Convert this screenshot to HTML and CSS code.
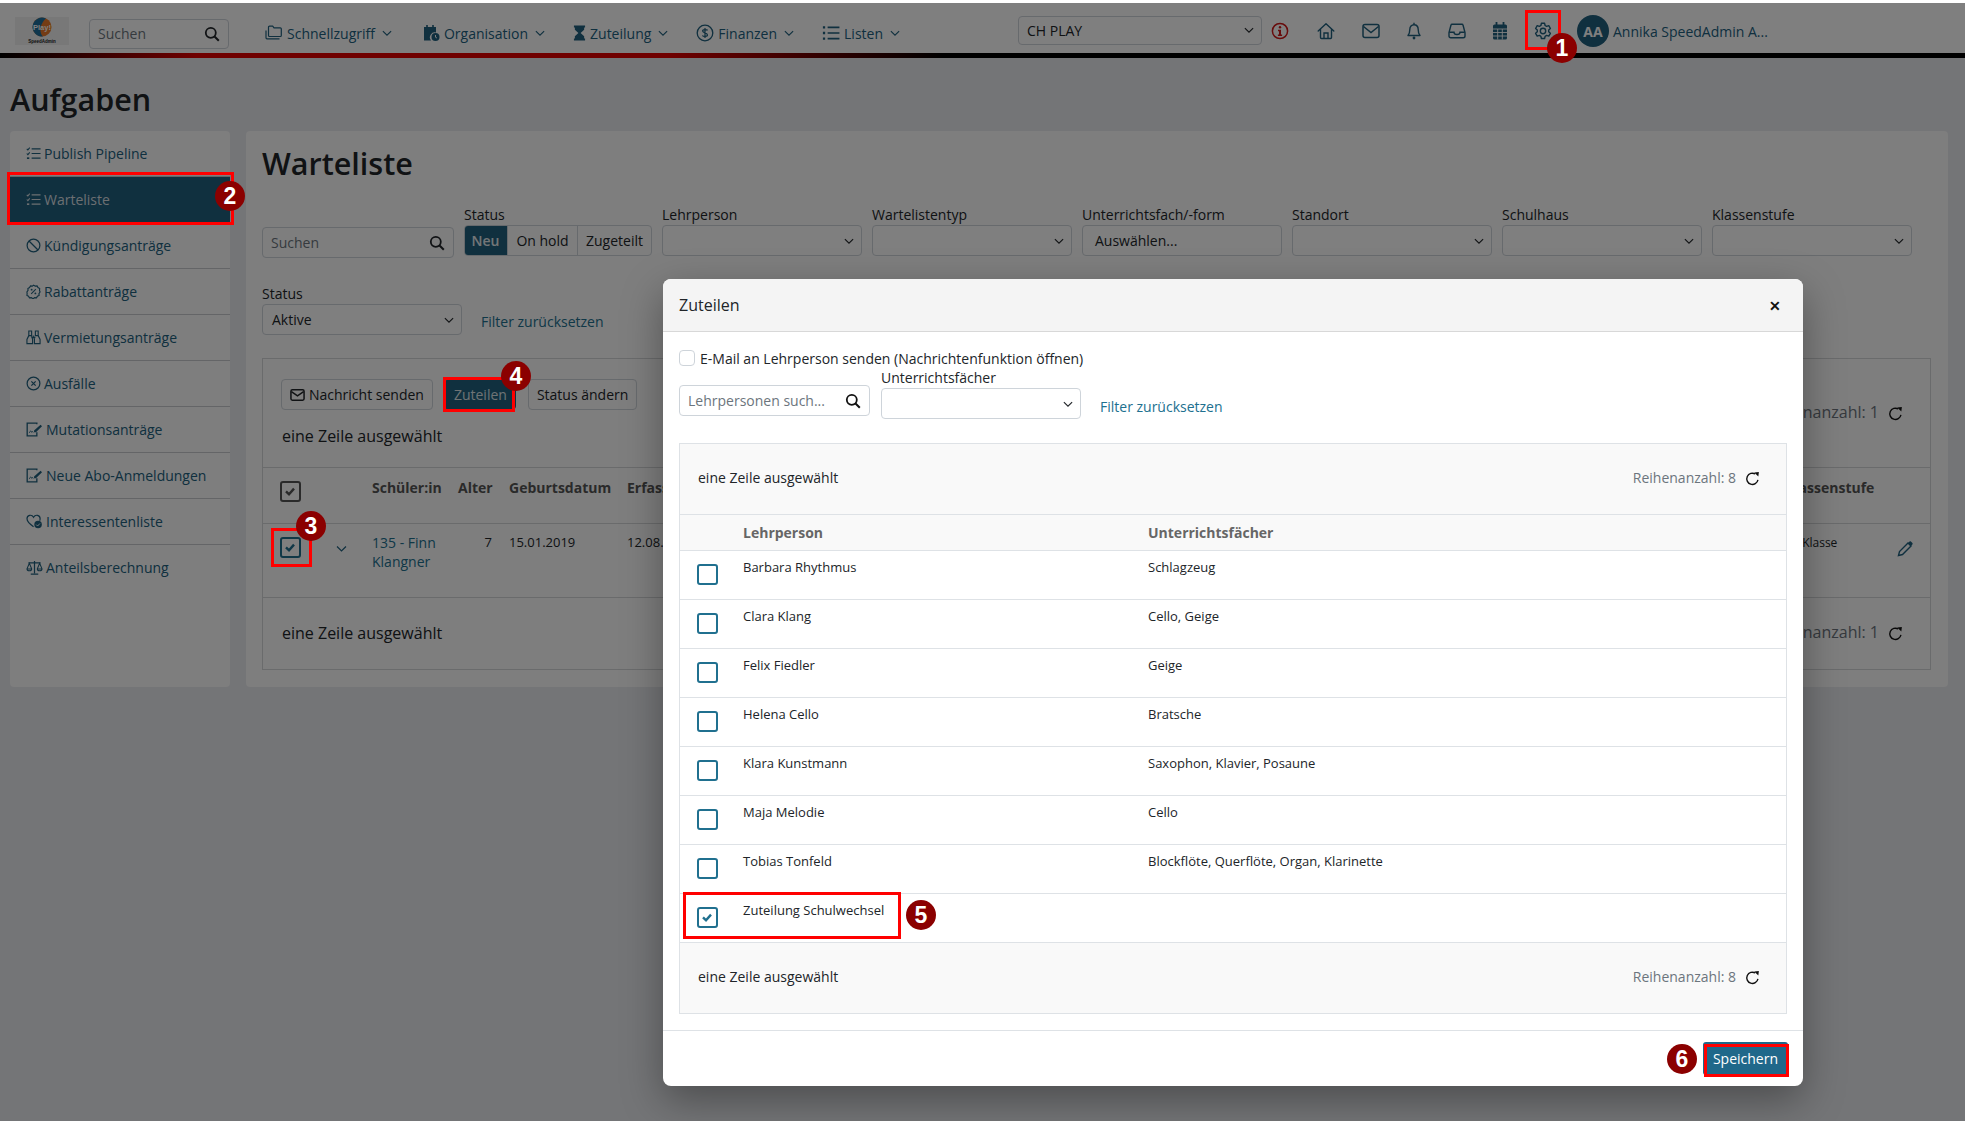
FILE: index.html
```html
<!DOCTYPE html>
<html lang="de">
<head>
<meta charset="utf-8">
<title>Aufgaben</title>
<link rel="stylesheet" href="styles.css">
</head>
<body>
<svg class="defs" width="0" height="0" aria-hidden="true">
  <symbol id="i-search" viewBox="0 0 16 16"><circle cx="6.8" cy="6.8" r="5" fill="none" stroke="currentColor" stroke-width="1.8"/><path d="M10.5 10.5l4.3 4.300" stroke="currentColor" stroke-width="2" fill="none"/></symbol>
  <symbol id="i-chev" viewBox="0 0 16 16"><path d="M2.500 5.500L8 11l5.500-5.500" fill="none" stroke="currentColor" stroke-width="1.500"/></symbol>
  <symbol id="i-folders" viewBox="0 0 18 16"><path d="M3.500 3V2.200c0-.6.400-1 1-1h3.200l1.300 1.600h6.300c.6 0 1 .4 1 1v6.700c0 .6-.4 1-1 1H4.500c-.6 0-1-.4-1-1z M1 5.500v7.300c0 .6.400 1 1 1h12.500" fill="none" stroke="currentColor" stroke-width="1.200"/></symbol>
  <symbol id="i-calclock" viewBox="0 0 18 18"><path d="M2 3h12v5.500a5 5 0 0 0-5 8H2z" fill="currentColor"/><path d="M5 1v3M11 1v3" stroke="currentColor" stroke-width="1.600"/><circle cx="13.500" cy="13" r="4" fill="currentColor"/><path d="M13.500 11v2.200l1.400.8" stroke="#fff" fill="none"/></symbol>
  <symbol id="i-hourglass" viewBox="0 0 14 18"><path d="M1 1h12v2h-1v2.500L8.200 9l3.800 3.500V15h1v2H1v-2h1v-2.500L5.800 9 2 5.500V3H1z" fill="currentColor"/></symbol>
  <symbol id="i-dollar" viewBox="0 0 18 18"><circle cx="9" cy="9" r="7.800" fill="none" stroke="currentColor" stroke-width="1.300"/><path d="M11.600 6.400C11 5.300 6.600 5 6.600 7s4.900 1.700 4.900 4c0 1.900-4.400 1.700-5.100.5M9 4v10" fill="none" stroke="currentColor" stroke-width="1.200"/></symbol>
  <symbol id="i-list" viewBox="0 0 16 16"><path d="M5 3h10.500M5 8h10.500M5 13h10.500" stroke="currentColor" stroke-width="1.500"/><path d="M.8 3h2M.8 8h2M.8 13h2" stroke="currentColor" stroke-width="2.200"/></symbol>
  <symbol id="i-info" viewBox="0 0 18 18"><circle cx="9" cy="9" r="7.600" fill="none" stroke="currentColor" stroke-width="1.500"/><circle cx="9" cy="5.300" r="1.200" fill="currentColor"/><path d="M7 7.800h3v4.700h1.100V14H6.900v-1.500H8V9.300H7z" fill="currentColor"/></symbol>
  <symbol id="i-home" viewBox="0 0 18 18"><path d="M1.200 9L9 1.800 16.800 9M3.500 7.300v8.200c0 .6.400 1 1 1h9c.6 0 1-.4 1-1V7.300" fill="none" stroke="currentColor" stroke-width="1.400" stroke-linejoin="round" stroke-linecap="round"/><path d="M7 16.500v-5.500h4v5.500" fill="none" stroke="currentColor" stroke-width="1.400"/></symbol>
  <symbol id="i-mail" viewBox="0 0 18 16"><rect x="1" y="1.500" width="16" height="13" rx="2" fill="none" stroke="currentColor" stroke-width="1.500"/><path d="M1.500 3.500L9 9.500l7.500-6" fill="none" stroke="currentColor" stroke-width="1.500"/></symbol>
  <symbol id="i-bell" viewBox="0 0 14 18"><path d="M1 13.500h12c-1.200-1.400-1.800-3-1.800-6 0-3-1.800-4.800-4.200-4.800S2.800 4.500 2.800 7.500c0 3-.6 4.600-1.800 6zM7 .8v2" fill="none" stroke="currentColor" stroke-width="1.400" stroke-linejoin="round"/><circle cx="7" cy="16" r="1.400" fill="currentColor"/></symbol>
  <symbol id="i-inbox" viewBox="0 0 18 16"><path d="M4 1.200h10c.5 0 .9.300 1 .8l2 7.500V13c0 1-.7 1.800-1.800 1.800H2.800C1.700 14.800 1 14 1 13V9.500L3 2c.1-.5.500-.8 1-.8z" fill="none" stroke="currentColor" stroke-width="1.400"/><path d="M1.300 9.300H6c0 3 6 3 6 0h4.700" fill="none" stroke="currentColor" stroke-width="1.400"/></symbol>
  <symbol id="i-cal" viewBox="0 0 16 18"><rect x="1" y="2.500" width="14" height="15" rx="1.500" fill="currentColor"/><path d="M4.500 0v4M11.500 0v4" stroke="currentColor" stroke-width="1.800"/><path d="M1 7h14M1 10.500h14M1 14h14M5.700 7v10.500M10.300 7v10.500" stroke="#fff" stroke-width=".9"/></symbol>
  <symbol id="i-gear" viewBox="0 0 18 18"><path d="M7.400 1.300h3.200l.5 2.200 1.500.9 2.200-.7 1.600 2.800-1.700 1.500v1.800l1.700 1.500-1.600 2.800-2.200-.7-1.500.9-.5 2.200H7.400l-.5-2.200-1.500-.9-2.200.7-1.600-2.800 1.700-1.500V8l-1.700-1.500 1.600-2.800 2.200.7 1.500-.9z" fill="none" stroke="currentColor" stroke-width="1.400" stroke-linejoin="round"/><circle cx="9" cy="9" r="2.700" fill="none" stroke="currentColor" stroke-width="1.400"/></symbol>
  <symbol id="i-listcheck" viewBox="0 0 16 16"><path d="M6 3h9.500M6 8h9.500M6 13h9.500" stroke="currentColor" stroke-width="1.300"/><path d="M.8 3l1.200 1.200L4 1.800M.8 8l1.200 1.200L4 6.800" fill="none" stroke="currentColor" stroke-width="1.100"/><path d="M1 13h2.500" stroke="currentColor" stroke-width="1.800"/></symbol>
  <symbol id="i-ban" viewBox="0 0 16 16"><circle cx="8" cy="8" r="6.800" fill="none" stroke="currentColor" stroke-width="1.300"/><path d="M3.200 3.200l9.600 9.600" stroke="currentColor" stroke-width="1.300"/></symbol>
  <symbol id="i-percent" viewBox="0 0 16 16"><path d="M8 1.200l1.800 1 2-.2 1 1.800 1.800 1-.2 2L15 8.500l-1.200 1.700.2 2-1.800.8-1 1.800-2-.2-1.700 1-1.800-1-2 .2-1-1.800-1.700-.8.2-2L1 8.500l1.200-1.700-.2-2 1.800-1 1-1.800 2 .2z" fill="none" stroke="currentColor" stroke-width="1.200"/><path d="M5.500 10.500l5-5" stroke="currentColor" stroke-width="1.100"/><circle cx="6" cy="6" r="1" fill="currentColor"/><circle cx="10" cy="10" r="1" fill="currentColor"/></symbol>
  <symbol id="i-binoc" viewBox="0 0 16 16"><path d="M3 1h3v5H3zM10 1h3v5h-3z" fill="none" stroke="currentColor" stroke-width="1.200"/><path d="M3 6L1 10v4.500h6V10L6 6M13 6l2 4v4.500H9V10l-1-4" fill="none" stroke="currentColor" stroke-width="1.200"/><path d="M6 8h4" stroke="currentColor" stroke-width="1.400"/></symbol>
  <symbol id="i-xcircle" viewBox="0 0 16 16"><circle cx="8" cy="8" r="6.800" fill="none" stroke="currentColor" stroke-width="1.300"/><path d="M5.700 5.700l4.600 4.600M10.300 5.700l-4.600 4.600" stroke="currentColor" stroke-width="1.300"/></symbol>
  <symbol id="i-sign" viewBox="0 0 18 16"><path d="M11.500 2.500V1.200H1.200v13.600h10.300V11" fill="none" stroke="currentColor" stroke-width="1.400"/><path d="M3.500 11.500c1.500-3 2-2 2.500-.5.700-1 1.200-1 1.800 0" fill="none" stroke="currentColor" stroke-width="1"/><path d="M8.500 9l7-6 1.500 1.500-6.500 6.500H8.500z" fill="currentColor"/></symbol>
  <symbol id="i-heart" viewBox="0 0 18 16"><path d="M8 13.500C3 10 1 7.800 1 5c0-4 5-5 7-1.500C10 0 15 1 15 5c0 .8-.2 1.500-.5 2.200" fill="none" stroke="currentColor" stroke-width="1.300"/><circle cx="12.800" cy="11.300" r="4" fill="currentColor"/><path d="M10.800 11.300l1.500 1.500 2.500-2.700" fill="none" stroke="#fff" stroke-width="1"/></symbol>
  <symbol id="i-scale" viewBox="0 0 18 16"><path d="M9 1v13M2.500 3h13M5 15h8" stroke="currentColor" stroke-width="1.300"/><path d="M3.500 3.500L1 9.500c0 2.600 5 2.600 5 0zM14.500 3.500L12 9.500c0 2.600 5 2.600 5 0zM1 9.500h5M12 9.500h5" fill="none" stroke="currentColor" stroke-width="1.100"/></symbol>
  <symbol id="i-envelope" viewBox="0 0 16 14"><rect x="1" y="1.500" width="14" height="11" rx="1.500" fill="none" stroke="currentColor" stroke-width="1.600"/><path d="M1.500 3.500L8 8l6.500-4.500" fill="none" stroke="currentColor" stroke-width="1.600"/></symbol>
  <symbol id="i-refresh" viewBox="0 0 16 16"><path d="M13.800 9.500A6 6 0 1 1 11 3.200" fill="none" stroke="currentColor" stroke-width="1.500"/><path d="M9.800 1.500l5 -.5-.6 4.800z" fill="currentColor"/></symbol>
  <symbol id="i-pencil" viewBox="0 0 16 16"><path d="M1.500 14.500l1-4L11 2l3 3-8.500 8.500z" fill="none" stroke="currentColor" stroke-width="1.400"/><path d="M10.800 2.200L12.600.6c.4-.4.9-.4 1.300 0l1.500 1.500c.4.400.4.900 0 1.300l-1.600 1.700z" fill="currentColor"/></symbol>
  <symbol id="i-check" viewBox="0 0 24 24"><path d="M6 12.500l4.500 4.500L18 8.500" fill="none" stroke="currentColor" stroke-width="3.600"/></symbol>
</svg>

<div class="strip"></div>
<header class="nav">
  <div class="logo">
    <svg viewBox="0 0 54 28" width="54" height="28"><circle cx="27" cy="10" r="9.500" fill="#e8792a"/><path d="M31 1.400a9.500 9.500 0 1 0-3 18.100c-5-5-2-14 3-18.100z" fill="#1f6f9c"/><text x="27" y="13" font-size="7.500" font-weight="700" fill="#fff" text-anchor="middle" font-family="Liberation Sans, sans-serif">Play!</text><text x="27" y="25.500" font-size="4.500" font-weight="700" fill="#222" text-anchor="middle" font-family="Liberation Sans, sans-serif">SpeedAdmin</text></svg>
  </div>
  <div class="nav-search"><span class="ph">Suchen</span><svg class="ic16 dark"><use href="#i-search"/></svg></div>
  <nav class="menu">
    <a class="menu-item"><svg class="ic-m"><use href="#i-folders"/></svg>Schnellzugriff<svg class="ic-c"><use href="#i-chev"/></svg></a>
    <a class="menu-item org"><svg class="ic-m"><use href="#i-calclock"/></svg>Organisation<svg class="ic-c"><use href="#i-chev"/></svg></a>
    <a class="menu-item"><svg class="ic-h"><use href="#i-hourglass"/></svg>Zuteilung<svg class="ic-c"><use href="#i-chev"/></svg></a>
    <a class="menu-item"><svg class="ic-m"><use href="#i-dollar"/></svg>Finanzen<svg class="ic-c"><use href="#i-chev"/></svg></a>
    <a class="menu-item"><svg class="ic-m"><use href="#i-list"/></svg>Listen<svg class="ic-c"><use href="#i-chev"/></svg></a>
  </nav>
  <div class="nav-right">
    <div class="select school"><span>CH PLAY</span><svg class="ic-c dark"><use href="#i-chev"/></svg></div>
    <svg class="ni info"><use href="#i-info"/></svg>
    <div class="ni-row">
      <svg class="ni home"><use href="#i-home"/></svg>
      <svg class="ni"><use href="#i-mail"/></svg>
      <svg class="ni"><use href="#i-bell"/></svg>
      <svg class="ni"><use href="#i-inbox"/></svg>
      <svg class="ni"><use href="#i-cal"/></svg>
      <svg class="ni"><use href="#i-gear"/></svg>
    </div>
    <div class="avatar">AA</div>
    <span class="user">Annika SpeedAdmin A...</span>
  </div>
</header>
<div class="rule"></div>

<div class="page">
  <h1 class="page-title">Aufgaben</h1>
  <div class="layout">
    <aside class="side">
      <a class="side-item"><svg class="si"><use href="#i-listcheck"/></svg>Publish Pipeline</a>
      <a class="side-item active"><svg class="si"><use href="#i-listcheck"/></svg>Warteliste</a>
      <a class="side-item"><svg class="si"><use href="#i-ban"/></svg>Kündigungsanträge</a>
      <a class="side-item"><svg class="si"><use href="#i-percent"/></svg>Rabattanträge</a>
      <a class="side-item"><svg class="si"><use href="#i-binoc"/></svg>Vermietungsanträge</a>
      <a class="side-item"><svg class="si"><use href="#i-xcircle"/></svg>Ausfälle</a>
      <a class="side-item"><svg class="si wide"><use href="#i-sign"/></svg>Mutationsanträge</a>
      <a class="side-item"><svg class="si wide"><use href="#i-sign"/></svg>Neue Abo-Anmeldungen</a>
      <a class="side-item"><svg class="si wide"><use href="#i-heart"/></svg>Interessentenliste</a>
      <a class="side-item last"><svg class="si wide"><use href="#i-scale"/></svg>Anteilsberechnung</a>
    </aside>
    <main class="main">
      <h2 class="main-title">Warteliste</h2>
      <div class="filters first">
        <div class="input search-main"><span class="ph">Suchen</span><svg class="ic16 dark"><use href="#i-search"/></svg></div>
        <div class="field status">
          <label>Status</label>
          <div class="btn-group"><span class="seg on">Neu</span><span class="seg hold">On hold</span><span class="seg assigned">Zugeteilt</span></div>
        </div>
        <div class="field"><label>Lehrperson</label><div class="select"><span></span><svg class="ic-c dark"><use href="#i-chev"/></svg></div></div>
        <div class="field"><label>Wartelistentyp</label><div class="select"><span></span><svg class="ic-c dark"><use href="#i-chev"/></svg></div></div>
        <div class="field"><label>Unterrichtsfach/-form</label><div class="select"><span class="pick">Auswählen...</span></div></div>
        <div class="field"><label>Standort</label><div class="select"><span></span><svg class="ic-c dark"><use href="#i-chev"/></svg></div></div>
        <div class="field"><label>Schulhaus</label><div class="select"><span></span><svg class="ic-c dark"><use href="#i-chev"/></svg></div></div>
        <div class="field"><label>Klassenstufe</label><div class="select"><span></span><svg class="ic-c dark"><use href="#i-chev"/></svg></div></div>
      </div>
      <div class="filters second">
        <div class="field"><label>Status</label><div class="select"><span>Aktive</span><svg class="ic-c dark"><use href="#i-chev"/></svg></div></div>
        <a class="reset">Filter zurücksetzen</a>
      </div>
      <section class="tbl">
        <div class="tbl-top">
          <div>
            <div class="actions">
              <span class="btn"><svg class="ic-e"><use href="#i-envelope"/></svg>Nachricht senden</span>
              <span class="btn primary">Zuteilen</span>
              <span class="btn">Status ändern</span>
            </div>
            <div class="selected">eine Zeile ausgewählt</div>
          </div>
          <div class="count">Reihenanzahl: 1<svg class="ic-r"><use href="#i-refresh"/></svg></div>
        </div>
        <div class="tbl-head">
          <span class="cb gray"><svg><use href="#i-check"/></svg></span>
          <span></span>
          <span>Schüler:in</span><span class="num">Alter</span><span>Geburtsdatum</span><span class="cut">Erfassungsdatum</span>
          <span class="gap"></span><span class="kl">Klassenstufe</span><span></span>
        </div>
        <div class="tbl-row">
          <span class="cb"><svg><use href="#i-check"/></svg></span>
          <svg class="ic-exp"><use href="#i-chev"/></svg>
          <a class="link">135 - Finn Klangner</a><span class="num">7</span><span>15.01.2019</span><span class="cut">12.08.2025</span>
          <span class="gap"></span><span class="small">1. Klasse</span><svg class="ic-p"><use href="#i-pencil"/></svg>
        </div>
        <div class="tbl-bottom">
          <div class="selected">eine Zeile ausgewählt</div>
          <div class="count">Reihenanzahl: 1<svg class="ic-r"><use href="#i-refresh"/></svg></div>
        </div>
      </section>
    </main>
  </div>
</div>

<div class="backdrop"></div>

<div class="modal">
  <div class="m-head"><span>Zuteilen</span><span class="close">✕</span></div>
  <div class="m-body">
    <div class="m-check"><span class="box"></span>E-Mail an Lehrperson senden (Nachrichtenfunktion öffnen)</div>
    <div class="m-filters">
      <div class="input m-search"><span class="ph">Lehrpersonen such...</span><svg class="ic16 black"><use href="#i-search"/></svg></div>
      <div class="field"><label>Unterrichtsfächer</label><div class="select"><span></span><svg class="ic-c dark"><use href="#i-chev"/></svg></div></div>
      <a class="reset">Filter zurücksetzen</a>
    </div>
    <section class="m-tbl">
      <div class="m-band top"><span>eine Zeile ausgewählt</span><span class="m-count">Reihenanzahl: 8<svg class="ic-r"><use href="#i-refresh"/></svg></span></div>
      <div class="m-row head"><span></span><span>Lehrperson</span><span>Unterrichtsfächer</span></div>
      <div class="m-row"><span class="cb"></span><span>Barbara Rhythmus</span><span>Schlagzeug</span></div>
      <div class="m-row"><span class="cb"></span><span>Clara Klang</span><span>Cello, Geige</span></div>
      <div class="m-row"><span class="cb"></span><span>Felix Fiedler</span><span>Geige</span></div>
      <div class="m-row"><span class="cb"></span><span>Helena Cello</span><span>Bratsche</span></div>
      <div class="m-row"><span class="cb"></span><span>Klara Kunstmann</span><span>Saxophon, Klavier, Posaune</span></div>
      <div class="m-row"><span class="cb"></span><span>Maja Melodie</span><span>Cello</span></div>
      <div class="m-row"><span class="cb"></span><span>Tobias Tonfeld</span><span>Blockflöte, Querflöte, Organ, Klarinette</span></div>
      <div class="m-row"><span class="cb"><svg><use href="#i-check"/></svg></span><span>Zuteilung Schulwechsel</span><span></span></div>
      <div class="m-band bottom"><span>eine Zeile ausgewählt</span><span class="m-count">Reihenanzahl: 8<svg class="ic-r"><use href="#i-refresh"/></svg></span></div>
    </section>
  </div>
  <div class="m-foot"><span class="save">Speichern</span></div>
</div>

<div class="mark m1"></div>
<div class="mark m2"></div>
<div class="mark m3"></div>
<div class="mark m4"></div>
<div class="mark m5"></div>
<div class="mark m6"></div>
<div class="badge b1">1</div>
<div class="badge b2">2</div>
<div class="badge b3">3</div>
<div class="badge b4">4</div>
<div class="badge b5">5</div>
<div class="badge b6">6</div>
</body>
</html>
```

FILE: styles.css
```css
* { box-sizing: border-box; }
html, body { margin: 0; padding: 0; }
body {
  position: relative;
  width: 1965px;
  height: 1121px;
  overflow: hidden;
  background: #e8eaee;
  font-family: "Open Sans", "Liberation Sans", sans-serif;
  font-size: 14px;
  color: #212529;
}
.defs { position: absolute; }
a { color: inherit; text-decoration: none; }

.strip { height: 3px; background: #fff; position: relative; z-index: 20; }

/* top bar */
.nav {
  height: 50px;
  background: #fff;
  display: flex;
  align-items: center;
  padding-left: 15px;
  padding-top: 6px;
}
.logo { width: 54px; height: 28px; background: #f0f0f0; }
.logo svg { display: block; }
.nav-search {
  width: 140px; height: 30px; margin-left: 20px; margin-top: 5px;
  border: 1px solid #ced4da; border-radius: 4px;
  display: flex; align-items: center; justify-content: space-between;
  padding: 0 8px;
}
.ph { color: #6c757d; }
.ic16 { width: 16px; height: 16px; }
.dark { color: #212529; }
.black { color: #111; }
.menu { display: flex; margin-left: 36px; margin-top: 4px; gap: 27px; color: #20607e; }
.menu-item { display: flex; align-items: center; white-space: nowrap; }
.menu-item.org { margin-left: 2px; }
.ic-m { width: 18px; height: 18px; margin-right: 4px; }
.ic-h { width: 13px; height: 18px; margin-right: 4px; }
.ic-c { width: 12px; height: 12px; margin-left: 6px; flex: none; }
.nav-right { display: flex; align-items: center; position: absolute; left: 1018px; top: 6px; height: 50px; }
.select {
  height: 31px; width: 200px;
  background: #fff;
  border: 1px solid #ced4da; border-radius: 4px;
  display: flex; align-items: center; justify-content: space-between;
  padding: 0 6px 0 8px;
}
.select.school { width: 244px; height: 29px; margin-top: -2px; }
.ni { width: 18px; height: 18px; color: #20607e; flex: none; }
.ni.info { color: #d01818; margin-left: 9px; }
.ni-row { display: flex; align-items: center; gap: 25px; margin-left: 28px; margin-right: 25px; }
.ni.home { margin-right: 2px; }
.avatar {
  width: 32px; height: 32px; border-radius: 50%;
  background: #20607e; color: #fff;
  font-weight: 700; font-size: 14px;
  display: flex; align-items: center; justify-content: center;
}
.user { margin-left: 4px; color: #20607e; white-space: nowrap; }
.rule { height: 5px; background: linear-gradient(90deg, #000 0, #e00000 10%, #e00000 34%, #000 48%); }

/* page */
.page { padding: 0 17px 0 10px; }
.page-title { margin: 20px 0 11px; font-size: 30.5px; line-height: 42px; font-weight: 600; color: #212529; }
.layout { display: flex; gap: 16px; height: 556px; }
.side { width: 220px; background: #fcfcfc; border-radius: 4px; flex: none; }
.side-item {
  height: 46px; display: flex; align-items: center;
  padding-left: 16px;
  color: #20607e;
  border-bottom: 1px solid #c8cbce;
  white-space: nowrap;
}
.side-item.active { background: #20607e; color: #d8dfe3; border-bottom: 0; padding-bottom: 2px; }
.side-item.last { border-bottom: 0; padding-bottom: 2px; }
.si { width: 15px; height: 15px; margin-right: 3px; flex: none; }
.si.wide { width: 17px; margin-right: 3px; }

.main { flex: 1; background: #fcfcfc; border-radius: 4px; padding: 12px 17px 0 16px; }
.main-title { margin: 0; font-size: 30.5px; line-height: 40px; font-weight: 600; }
.filters { display: flex; align-items: flex-end; gap: 10px; }
.filters.first { margin-top: 22px; }
.filters.second { margin-top: 28px; gap: 19px; }
.field label { display: block; line-height: 20px; white-space: nowrap; }
.input {
  height: 31px;
  border: 1px solid #ced4da; border-radius: 4px;
  display: flex; align-items: center; justify-content: space-between;
  padding: 0 8px;
}
.search-main { width: 192px; margin-bottom: -2px; }
.btn-group { display: flex; height: 31px; width: 188px; border: 1px solid #ced4da; border-radius: 4px; overflow: hidden; }
.seg { display: flex; align-items: center; justify-content: center; border-right: 1px solid #ced4da; }
.seg.hold { width: 70px; }
.seg.assigned { flex: 1; border-right: 0; }
.seg.on { background: #20607e; color: #e6ecef; font-weight: 600; width: 44px; margin: -1px 0 -1px -1px; }
.pick { padding-left: 4px; }
.filters.second .select span { padding-left: 1px; }
.reset { color: #20708f; padding-bottom: 3px; line-height: 20px; }

/* background table */
.tbl { margin-top: 23px; border: 1px solid #d4d6d9; height: 312px; position: relative; }
.tbl-top { height: 109px; padding: 20px 27px 0 18px; display: flex; justify-content: space-between; border-bottom: 1px solid #d4d6d9; }
.actions { display: flex; gap: 12px; }
.btn {
  height: 31px; padding: 0 8px; border: 1px solid #ced4da; border-radius: 4px;
  display: flex; align-items: center; white-space: nowrap;
}
.btn.primary { background: #20607e; color: #dfe6ea; border-color: #20607e; }
.ic-e { width: 15px; height: 14px; margin-right: 4px; }
.selected { font-size: 16px; line-height: 22px; margin-top: 15px; margin-left: 1px; white-space: nowrap; }
.count { color: #6c757d; font-size: 16px; white-space: nowrap; display: flex; align-items: center; height: 22px; margin-top: 22px; }
.ic-r { width: 15px; height: 15px; margin-left: 9px; margin-top: 2px; color: #111; }
.tbl-head, .tbl-row {
  display: grid;
  grid-template-columns: 22px 70px 86px 34px 135px 36px 1fr 108px 16px;
  padding: 0 17px;
  border-bottom: 1px solid #d4d6d9;
  font-size: 13px;
}
.tbl-head { height: 56px; padding-top: 10px; font-weight: 700; color: #555; font-size: 14px; white-space: nowrap; }
.tbl-row { height: 74px; padding-top: 9px; line-height: 19px; }
.tbl-head > :nth-child(5), .tbl-row > :nth-child(5) { padding-left: 17px; }
.cut { overflow: hidden; white-space: nowrap; }
.kl { margin-left: -4px; }
.num { text-align: right; }
.cb {
  display: block; width: 21px; height: 21px;
  border: 2.5px solid #20708f; border-radius: 3px;
  color: #20708f; background: #fff;
}
.cb svg { display: block; width: 16px; height: 16px; }
.cb.gray { border-color: #555; color: #555; margin-top: 3px; }
.tbl-row .cb { margin-top: 4px; }
.ic-exp { width: 13px; height: 13px; margin: 9px 0 0 33px; color: #20607e; }
.link { color: #20708f; font-size: 14px; }
.small { font-size: 12px; white-space: nowrap; }
.ic-p { width: 16px; height: 16px; color: #20607e; margin-top: 8px; }
.tbl-bottom { height: 71px; display: flex; justify-content: space-between; padding: 0 27px 0 18px; }
.tbl-bottom .selected { margin-top: 24px; }
.tbl-bottom .count { margin-top: 23px; }

/* overlay */
.backdrop { position: absolute; left: 0; right: 0; top: 3px; bottom: 0; background: rgba(0,0,0,.5); z-index: 5; }

.modal {
  position: absolute; left: 663px; top: 279px; width: 1140px; height: 807px;
  background: #fff; border-radius: 8px;
  box-shadow: 0 14px 40px rgba(0,0,0,.35);
  z-index: 10;
  display: flex; flex-direction: column;
}
.m-head {
  height: 53px; flex: none; background: #f4f4f4;
  border-bottom: 1px solid #d8d8d8;
  border-radius: 8px 8px 0 0;
  display: flex; align-items: center; justify-content: space-between;
  padding: 0 22px 0 16px;
  font-size: 16px;
}
.close { font-size: 14px; font-weight: 700; color: #111; }
.m-body { flex: 1; padding: 16px 16px 0; }
.m-check { display: flex; align-items: center; height: 20px; gap: 5px; white-space: nowrap; }
.box { width: 16px; height: 16px; border: 1px solid #ced4da; border-radius: 4px; display: block; }
.m-filters { display: flex; align-items: flex-end; gap: 11px; }
.m-search { width: 191px; margin-bottom: 3px; }
.m-filters .reset { margin-left: 8px; padding-bottom: 2px; }
.m-tbl { margin-top: 24px; border: 1px solid #dee2e6; }
.m-band {
  height: 70px; background: #f9f9f9;
  display: flex; align-items: center; justify-content: space-between;
  padding: 0 26px 0 18px;
}
.m-band.top { padding-bottom: 3px; }
.m-band.bottom { border-top: 1px solid #dee2e6; height: 71px; padding-bottom: 3px; }
.m-count { color: #6c757d; font-size: 14px; display: flex; align-items: center; }
.m-row {
  height: 49px; display: grid; grid-template-columns: 63px 405px 1fr;
  border-top: 1px solid #dee2e6; font-size: 13px;
  padding-top: 6px; line-height: 20px; align-items: start;
}
.m-row > .cb { margin: 7px 0 0 17px; }
.m-row.head { height: 36px; background: #f9f9f9; font-weight: 700; color: #666; padding-top: 0; align-items: center; font-size: 14px; }
.m-foot {
  height: 56px; flex: none;
  border-top: 1px solid #dee2e6;
  display: flex; justify-content: flex-end; align-items: center;
  padding-right: 15px;
}
.save { width: 85px; height: 33px; background: #20688a; color: #fff; display: flex; align-items: center; justify-content: center; border-radius: 3px; }

/* annotations */
.mark { position: absolute; border: 3px solid #f00; z-index: 15; }
.m1 { left: 1525px; top: 10px; width: 36px; height: 40px; }
.m2 { left: 7px; top: 172px; width: 227px; height: 53px; }
.m3 { left: 271px; top: 528px; width: 41px; height: 39px; }
.m4 { left: 443px; top: 377px; width: 72px; height: 35px; }
.m5 { left: 683px; top: 892px; width: 218px; height: 47px; }
.m6 { left: 1704px; top: 1044px; width: 85px; height: 33px; }
.badge {
  position: absolute; width: 30px; height: 30px; border-radius: 50%;
  background: #8b0000; color: #fff; z-index: 16;
  display: flex; align-items: center; justify-content: center;
  font: 700 23px/1 "Liberation Sans", sans-serif;
}
.b1 { left: 1547px; top: 33px; }
.b2 { left: 215px; top: 181px; }
.b3 { left: 296px; top: 511px; }
.b4 { left: 501px; top: 361px; }
.b5 { left: 906px; top: 900px; }
.b6 { left: 1667px; top: 1044px; }
```
